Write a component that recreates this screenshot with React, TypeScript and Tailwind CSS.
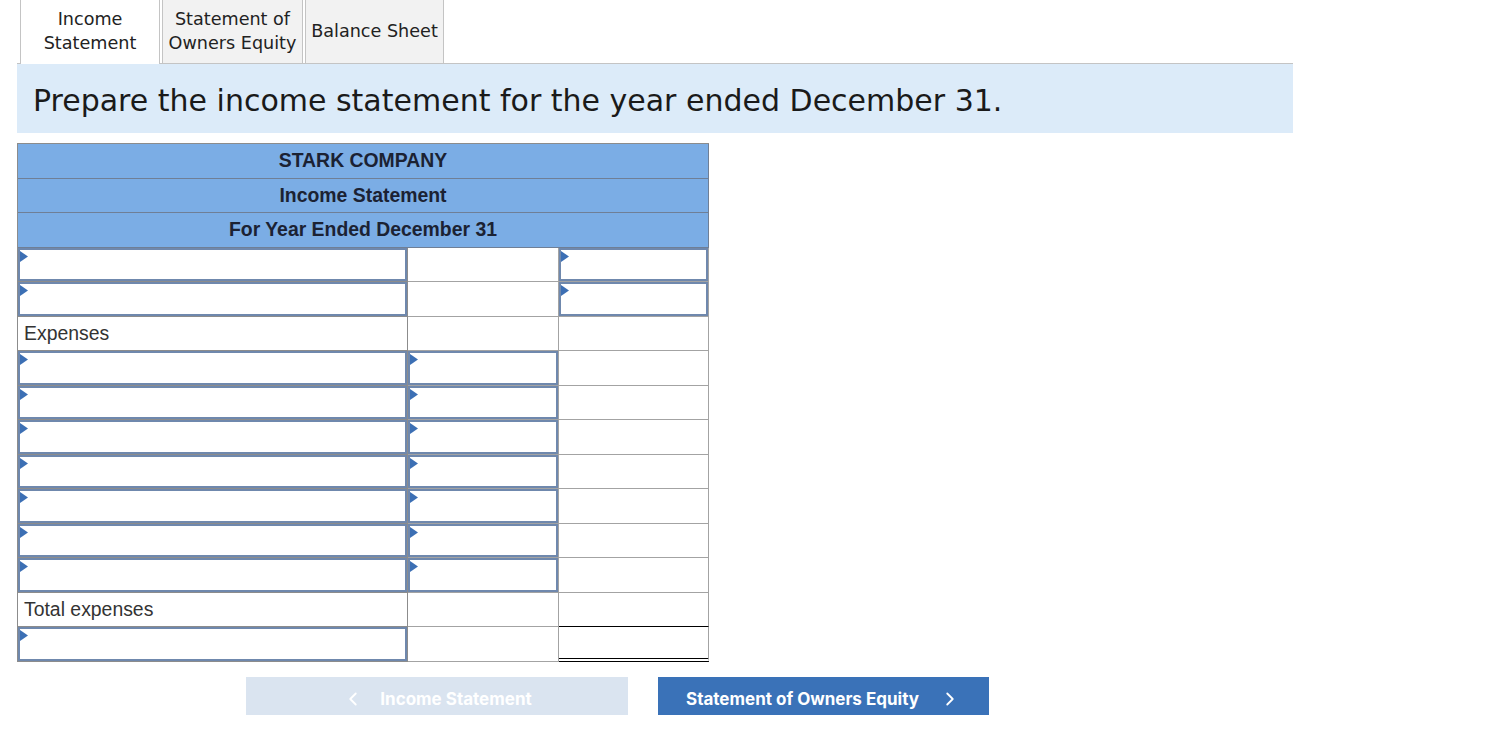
import { ChevronLeft, ChevronRight } from 'lucide-react';

type Cell = { kind: 'blank' | 'input' | 'label'; text?: string; total?: 'single' | 'double' };

// rows of the statement grid: [account, amount, total]
const ROWS: Cell[][] = [
  [{ kind: 'input' }, { kind: 'blank' }, { kind: 'input' }],
  [{ kind: 'input' }, { kind: 'blank' }, { kind: 'input' }],
  [{ kind: 'label', text: 'Expenses' }, { kind: 'blank' }, { kind: 'blank' }],
  [{ kind: 'input' }, { kind: 'input' }, { kind: 'blank' }],
  [{ kind: 'input' }, { kind: 'input' }, { kind: 'blank' }],
  [{ kind: 'input' }, { kind: 'input' }, { kind: 'blank' }],
  [{ kind: 'input' }, { kind: 'input' }, { kind: 'blank' }],
  [{ kind: 'input' }, { kind: 'input' }, { kind: 'blank' }],
  [{ kind: 'input' }, { kind: 'input' }, { kind: 'blank' }],
  [{ kind: 'input' }, { kind: 'input' }, { kind: 'blank' }],
  [{ kind: 'label', text: 'Total expenses' }, { kind: 'blank' }, { kind: 'blank', total: 'single' }],
  [{ kind: 'input' }, { kind: 'blank' }, { kind: 'blank', total: 'double' }],
];

const WIDTHS = ['w-[390px]', 'w-[151px]', 'w-[150px]'];

function InputBox() {
  return (
    <div className="relative h-full w-full border-2 border-[#6f88ad] bg-white">
      <svg className="absolute left-0 top-[1px]" width="8" height="11" viewBox="0 0 8 11">
        <polygon points="0,0 8,5.5 0,11" fill="#3c6fb4" />
      </svg>
    </div>
  );
}

function Tab({ lines, active }: { lines: string[]; active?: boolean }) {
  return (
    <div
      className={`flex h-16 flex-col items-center justify-center border-x border-[#c4c4c4] pb-[2px] leading-[24px] ${
        active ? 'bg-white' : 'border-b bg-[#f2f2f2]'
      }`}
    >
      {lines.map((l) => (
        <span key={l} className="whitespace-nowrap">
          {l}
        </span>
      ))}
    </div>
  );
}

export default function App() {
  return (
    <div className="min-h-screen bg-white pl-[17px] font-['DejaVu_Sans',sans-serif] text-[#222]">
      {/* Tabs */}
      <div className="flex w-[1276px] items-end text-[17.6px]">
        <div className="h-16 w-[3px] border-b border-[#c4c4c4]" />
        <div className="w-[140px]">
          <Tab lines={['Income', 'Statement']} active />
        </div>
        <div className="h-16 w-[2px] border-b border-[#c4c4c4]" />
        <div className="w-[141px]">
          <Tab lines={['Statement of', 'Owners Equity']} />
        </div>
        <div className="h-16 w-[2px] border-b border-[#c4c4c4]" />
        <div className="w-[139px]">
          <Tab lines={['Balance Sheet']} />
        </div>
        <div className="h-16 flex-1 border-b border-[#c4c4c4]" />
      </div>

      {/* Prompt */}
      <div className="flex h-[69px] w-[1276px] items-center bg-[#dcebf9] pl-4 pt-[3px] text-[30px] text-[#1a1a1a]">
        Prepare the income statement for the year ended December 31.
      </div>

      {/* Statement */}
      <div className="mt-[10px] w-[692px] border-l border-t border-[#8c8c8c] font-['Liberation_Sans',Arial,sans-serif] text-[19.4px]">
        {['STARK COMPANY', 'Income Statement', 'For Year Ended December 31'].map((h) => (
          <div
            key={h}
            className="flex h-[34.6px] items-center justify-center border-b border-r border-[#6f7f96] bg-[#7badE5] font-bold text-[#1b2233]"
          >
            {h}
          </div>
        ))}
        {ROWS.map((row, i) => (
          <div key={i} className="flex h-[34.5px]">
            {row.map((c, j) => (
              <div
                key={j}
                className={`${WIDTHS[j]} h-full shrink-0 border-b border-r ${
                  j === 0 ? 'border-[#8c8c8c]' : 'border-[#a3a3a3]'
                } ${c.total === 'single' ? 'border-b-black' : ''} ${
                  c.total === 'double' ? 'border-b-[4px] border-double border-b-black border-r-[#a3a3a3]' : ''
                }`}
              >
                {c.kind === 'input' && <InputBox />}
                {c.kind === 'label' && (
                  <div className="flex h-full items-center pl-[6px] text-[#333]">{c.text}</div>
                )}
              </div>
            ))}
          </div>
        ))}
      </div>

      {/* Navigation */}
      <div className="ml-[229px] mt-[15px] flex gap-[30px] font-['Inter',sans-serif] text-[17px] font-bold">
        <button className="flex h-[38px] w-[382px] items-center justify-center gap-[16px] bg-[#dae4f0] pt-[7px] text-white">
          <ChevronLeft size={22} strokeWidth={2} />
          <span>Income Statement</span>
        </button>
        <button className="flex h-[38px] w-[331px] items-center justify-center gap-[20px] bg-[#3a72b8] pt-[7px] text-white">
          <span>Statement of Owners Equity</span>
          <ChevronRight size={22} strokeWidth={2} />
        </button>
      </div>
    </div>
  );
}
